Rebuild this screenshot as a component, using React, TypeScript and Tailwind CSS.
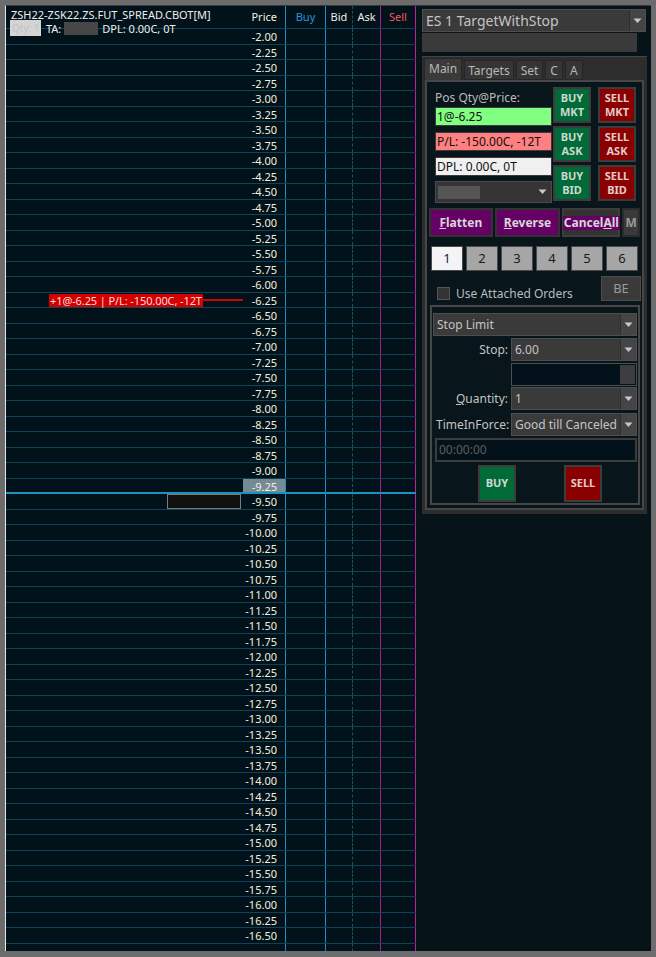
import React from "react";

const font = { fontFamily: '"Noto Sans", "Open Sans", sans-serif' };

const prices: string[] = [];
for (let i = 0; i <= 58; i++) prices.push((-2 - i * 0.25).toFixed(2));

function Caret() {
  return (
    <svg width="9" height="6" viewBox="0 0 9 6">
      <path d="M0.5 0.5 L8.5 0.5 L4.5 5 Z" fill="#c8c8c8" />
    </svg>
  );
}

function Select({ text, className, arrowBox = "w-[16px]" }: { text: string; className?: string; arrowBox?: string }) {
  return (
    <div className={`flex items-center bg-[#3a3a3a] border border-[#4e4e4e] text-[#c4c4c4] ${className ?? ""}`}>
      <span className="flex-1 pl-[3px] truncate">{text}</span>
      <span className={`h-full ${arrowBox} bg-[#454545] border-l border-[#2e2e2e] flex items-center justify-center`}>
        <Caret />
      </span>
    </div>
  );
}

// empty price/buy/bid/ask/sell cells, used under the last row
function Cells() {
  return (
    <>
      <div className="w-[43px] shrink-0 border-r border-[#1d8cc4]" />
      <div className="w-[40px] shrink-0 border-r border-[#1d8cc4]" />
      <div className="w-[27px] shrink-0 border-r border-dashed border-[#1d4f60]" />
      <div className="w-[28px] shrink-0 border-r border-[#a51c93]" />
      <div className="w-[35px] shrink-0 border-r border-[#c8189e]" />
    </>
  );
}

function Row({ p, i }: { p: string; i: number }) {
  const current = p === "-9.25";
  return (
    <div
      className={`flex h-[15.5px] shrink-0 ${current ? "border-b-2 border-[#1b92bd]" : "border-b border-[#0f4457]"}`}
    >
      <div className="w-[237px] shrink-0 relative">
        {p === "-6.25" && (
          <div className="absolute left-[43px] top-[1px] flex items-center">
            <div className="bg-[#d40000] text-[#f4dede] text-[11px] leading-[13px] h-[13px] px-[1px] whitespace-nowrap tracking-[-0.1px]">
              +1@-6.25 | P/L: -150.00C, -12T
            </div>
            <div className="w-[40px] h-[2px] bg-[#d40000]" />
          </div>
        )}
        {i === 30 && (
          <div className="absolute right-[2px] top-0 w-[74px] h-[15px] bg-[#111111] border border-[#7a7a7a]" />
        )}
      </div>
      <div
        className={`w-[43px] shrink-0 border-r border-[#1d8cc4] text-right pr-[8px] text-[11px] leading-[15px] text-[#f6efdf] ${current ? "bg-[#748b96]" : ""}`}
      >
        {p}
      </div>
      <div className="w-[40px] shrink-0 border-r border-[#1d8cc4]" />
      <div className="w-[27px] shrink-0 border-r border-dashed border-[#1d4f60]" />
      <div className="w-[28px] shrink-0 border-r border-[#a51c93]" />
      <div className="w-[35px] shrink-0 border-r border-[#c8189e]" />
    </div>
  );
}

function Btn({ top, bottom, buy }: { top: string; bottom: string; buy: boolean }) {
  return (
    <div
      className={`w-[38px] h-[36px] border-2 border-[#3c3c3c] flex flex-col items-center justify-center font-bold text-[11px] leading-[14px] ${
        buy ? "bg-[#006b38] text-[#cfd8cf]" : "bg-[#8a0000] text-[#e2cccc]"
      }`}
    >
      <span>{top}</span>
      <span>{bottom}</span>
    </div>
  );
}

export default function App() {
  return (
    <div className="w-[656px] h-[957px] bg-[#6c6c6c] pt-[5px] pl-[5px] pr-[5px] pb-[6px]" style={font}>
      <div className="w-full h-full flex bg-[#02121a] border-l border-t border-[#e8e8e8] border-t-[#3a3a3a]">
        {/* ladder */}
        <div className="w-[410px] shrink-0 flex flex-col h-full">
          <div className="flex h-[23px] shrink-0 border-b border-[#0f4457]">
            <div className="w-[237px] shrink-0 relative text-[11px] text-[#eeeeee]">
              <div className="absolute left-[5px] top-[1px] leading-[15px] whitespace-nowrap">
                ZSH22-ZSK22.ZS.FUT_SPREAD.CBOT[M]
              </div>
              <div className="absolute left-[4px] top-[14px] flex items-center leading-[15px] whitespace-nowrap">
                <span className="bg-[#d4d4d4] text-[#c2c2c2] w-[31px] h-[16px] pl-[2px] text-[10px] leading-[16px] overflow-hidden">
                  Qty: 1
                </span>
                <span className="ml-[5px]">TA:</span>
                <span className="ml-[3px] w-[34px] h-[13px] bg-[#474747]" />
                <span className="ml-[4px]">DPL: 0.00C, 0T</span>
              </div>
            </div>
            <div className="w-[43px] shrink-0 border-r border-[#1d8cc4] text-[11px] text-[#f6efdf] text-right pr-[8px] pt-[3px]">
              Price
            </div>
            <div className="w-[40px] shrink-0 border-r border-[#1d8cc4] text-[11px] text-[#2b93e0] text-center pt-[3px]">
              Buy
            </div>
            <div className="w-[27px] shrink-0 border-r border-dashed border-[#1d4f60] text-[11px] text-[#eeeeee] text-center pt-[3px]">
              Bid
            </div>
            <div className="w-[28px] shrink-0 border-r border-[#a51c93] text-[11px] text-[#eeeeee] text-center pt-[3px]">
              Ask
            </div>
            <div className="w-[35px] shrink-0 border-r border-[#c8189e] text-[11px] text-[#f25a5a] text-center pt-[3px]">
              Sell
            </div>
          </div>
          {prices.map((p, i) => (
            <Row key={p} p={p} i={i} />
          ))}
          <div className="flex flex-1">
            <div className="w-[237px] shrink-0" />
            <Cells />
          </div>
        </div>

        {/* right panel */}
        <div className="flex-1 pl-[6px] pr-[4px] pt-[3px] text-[12px] text-[#c4c4c4] bg-[#06141a]">
          <Select text="ES 1 TargetWithStop" className="h-[23px] w-[224px] text-[14px]" arrowBox="w-[16px]" />
          <div className="h-[19px] w-[215px] bg-[#3a3a3a] mt-[1px]" />

          {/* tab control */}
          <div className="mt-[4px] w-[225px] h-[458px] bg-[#2d2d2d] border-t border-[#444] flex flex-col">
            <div className="flex items-end h-[23px] pl-[2px] gap-[2px] text-[12px] text-[#b8b8b8]">
              <div className="h-[22px] px-[4px] bg-[#3a3a3a] border border-[#262626] border-b-0 leading-[20px]">Main</div>
              <div className="h-[20px] px-[3px] bg-[#353535] border border-[#262626] leading-[19px]">Targets</div>
              <div className="h-[20px] px-[4px] bg-[#353535] border border-[#262626] leading-[19px]">Set</div>
              <div className="h-[20px] px-[4px] bg-[#353535] border border-[#262626] leading-[19px]">C</div>
              <div className="h-[20px] px-[4px] bg-[#353535] border border-[#262626] leading-[19px]">A</div>
            </div>
            <div className="flex-1 mx-[3px] mb-[4px] border-2 border-[#474747] bg-[#08151a] px-[2px] pt-[5px]">
              {/* positions + buttons */}
              <div className="flex">
                <div className="w-[117px] ml-[6px] mt-[4px]">
                  <div className="text-[12px] leading-[14px] text-[#bcbcbc]">Pos Qty@Price:</div>
                  <div className="mt-[2px] h-[19px] bg-[#80ff80] border border-[#3a3a3a] text-[#101010] text-[12px] leading-[17px] pl-[1px]">
                    1@-6.25
                  </div>
                  <div className="mt-[6px] h-[19px] bg-[#ff8080] border border-[#3a3a3a] text-[#101010] text-[12px] leading-[17px] pl-[1px]">
                    P/L: -150.00C, -12T
                  </div>
                  <div className="mt-[6px] h-[19px] bg-[#f0f0f0] border border-[#3a3a3a] text-[#101010] text-[12px] leading-[17px] pl-[1px]">
                    DPL: 0.00C, 0T
                  </div>
                  <div className="mt-[5px] h-[22px] bg-[#353535] border border-[#4a4a4a] flex items-center pl-[2px]">
                    <span className="w-[42px] h-[13px] bg-[#555555]" />
                    <span className="flex-1" />
                    <span className="pr-[4px]">
                      <Caret />
                    </span>
                  </div>
                </div>
                <div className="ml-[1px] flex flex-col gap-[3px]">
                  <Btn top="BUY" bottom="MKT" buy />
                  <Btn top="BUY" bottom="ASK" buy />
                  <Btn top="BUY" bottom="BID" buy />
                </div>
                <div className="ml-[7px] flex flex-col gap-[3px]">
                  <Btn top="SELL" bottom="MKT" buy={false} />
                  <Btn top="SELL" bottom="ASK" buy={false} />
                  <Btn top="SELL" bottom="BID" buy={false} />
                </div>
              </div>

              {/* flatten row */}
              <div className="flex mt-[5px] gap-[2px] h-[29px] text-[12px] font-bold text-[#d6d6d6]">
                <div className="w-[65px] bg-[#650065] border-2 border-[#333] flex items-center justify-center">
                  <span>
                    <span className="underline">F</span>latten
                  </span>
                </div>
                <div className="w-[67px] bg-[#650065] border-2 border-[#333] flex items-center justify-center">
                  <span>
                    <span className="underline">R</span>everse
                  </span>
                </div>
                <div className="w-[58px] bg-[#333333] border-2 border-[#3d3d3d] flex items-center justify-center">
                  <span className="bg-[#650065] px-[1px] leading-[14px]">
                    Cancel<span className="underline">A</span>ll
                  </span>
                </div>
                <div className="w-[18px] bg-[#3a3a3a] border-2 border-[#2b2b2b] flex items-center justify-center text-[#9a9a9a]">
                  M
                </div>
              </div>

              {/* number row */}
              <div className="flex mt-[9px] ml-[2px] gap-[3px] text-[13px] text-[#1a1a1a]">
                {["1", "2", "3", "4", "5", "6"].map((n) => (
                  <div
                    key={n}
                    className={`w-[32px] h-[25px] border border-[#4a4a4a] flex items-center justify-center ${
                      n === "1" ? "bg-[#f4f4f4] text-[#202060]" : "bg-[#a6a6a6]"
                    }`}
                  >
                    {n}
                  </div>
                ))}
              </div>

              {/* attached orders */}
              <div className="flex items-center mt-[6px] h-[25px]">
                <span className="ml-[8px] mt-[8px] w-[13px] h-[13px] bg-[#333] border border-[#555]" />
                <span className="ml-[6px] mt-[8px] text-[12px] text-[#bcbcbc]">Use Attached Orders</span>
                <span className="flex-1" />
                <span className="w-[40px] h-[25px] -mr-[1px] -mt-[2px] bg-[#3a3a3a] border border-[#4c4c4c] text-[#9a9a9a] flex items-center justify-center text-[13px]">
                  BE
                </span>
              </div>

              {/* order group */}
              <div className="mt-[3px] ml-[1px] h-[200px] border-2 border-[#474747] px-[1px] pt-[6px] text-[12px]">
                <Select text="Stop Limit" className="h-[23px]" />
                <div className="flex items-center mt-[2px]">
                  <span className="w-[78px] text-right pr-[3px]">Stop:</span>
                  <Select text="6.00" className="h-[23px] flex-1" />
                </div>
                <div className="flex mt-[2px]">
                  <span className="w-[78px]" />
                  <div className="flex-1 h-[23px] bg-[#03121a] border border-[#4e4e4e] flex justify-end pr-[1px] pt-[1px]">
                    <span className="w-[15px] h-[19px] bg-[#3e3e3e]" />
                  </div>
                </div>
                <div className="flex items-center mt-[1px]">
                  <span className="w-[78px] text-right pr-[3px]">
                    <span className="underline">Q</span>uantity:
                  </span>
                  <Select text="1" className="h-[23px] flex-1" />
                </div>
                <div className="flex items-center mt-[3px]">
                  <span className="w-[78px] pl-[3px] whitespace-nowrap">TimeInForce:</span>
                  <Select text="Good till Canceled" className="h-[23px] flex-1 text-[12px]" />
                </div>
                <div className="mt-[2px] ml-[2px] h-[24px] bg-[#03121a] border-2 border-[#3c3c3c] text-[#5c5c5c] pl-[2px] leading-[19px]">
                  00:00:00
                </div>
                <div className="flex mt-[3px] pl-[45px] gap-[48px]">
                  <div className="w-[38px] h-[37px] bg-[#006b38] border-2 border-[#3c3c3c] flex items-center justify-center font-bold text-[11px] text-[#cfd8cf]">
                    BUY
                  </div>
                  <div className="w-[38px] h-[37px] bg-[#8a0000] border-2 border-[#3c3c3c] flex items-center justify-center font-bold text-[11px] text-[#e2cccc]">
                    SELL
                  </div>
                </div>
              </div>
            </div>
          </div>
        </div>
      </div>
    </div>
  );
}
